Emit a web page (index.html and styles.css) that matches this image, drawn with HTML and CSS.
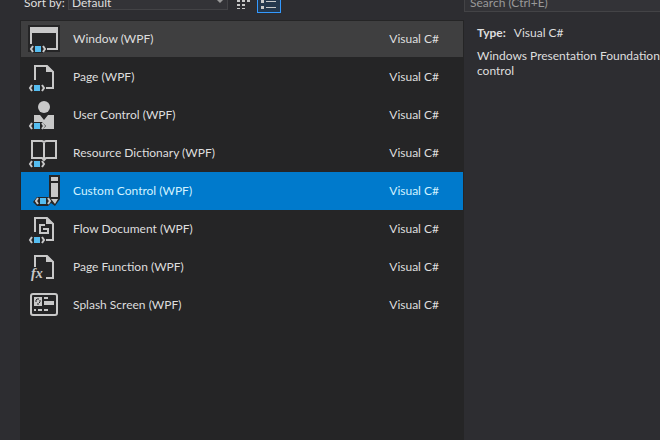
FILE: index.html
```
<!DOCTYPE html>
<html lang="en">
<head>
<meta charset="utf-8">
<title>Add New Item</title>
<link rel="stylesheet" href="styles.css">
</head>
<body>
<svg class="defs" aria-hidden="true">
<defs>
<g id="tag">
<path class="edge" d="M4 23L0 27l4 4h10l4-4-4-4z"/>
<path class="line" d="M4 24l-2 3 2 3M14 24l2 3-2 3"/>
<path class="blue" d="M6 24h6v6H6z"/>
</g>
<path id="sheet" d="M7 19V5h12l6 6v16h-7"/>
</defs>
</svg>
<div class="dialog">
<main class="templates">
<div class="toolbar">
<label for="sort">Sort by:</label>
<span class="sort">
<select id="sort">
<option>Default</option>
<option>Name Ascending</option>
<option>Name Descending</option>
</select>
<svg class="arrow" viewBox="0 0 8 4"><path d="M0 0h8L4 4z"/></svg>
</span>
<button class="view" aria-label="Small icons">
<svg viewBox="0 0 16 16"><path class="fill" d="M0 3h3v2H0zM5 3h3v2H5zM10 3h3v2h-3zM0 7h3v2H0zM5 7h3v2H5zM10 7h3v2h-3zM0 11h3v2H0zM5 11h3v2H5zM0 15h3v1H0zM5 15h3v1H5z"/></svg>
</button>
<button class="view active" aria-label="Medium icons">
<svg viewBox="0 0 16 16"><path class="fill" d="M0 1h3v3H0zM5 2h10v1H5zM0 7h3v3H0zM5 8h10v1H5zM0 13h3v3H0zM5 14h10v1H5z"/></svg>
</button>
</div>
<ul class="list">
<li class="item hover">
<svg class="icon" viewBox="0 0 32 32">
<path class="edge" d="M0 2h32v27H0z"/>
<path class="fill" d="M2 4h28v23H19v-2h9V10H4v11H2z"/>
<use href="#tag" x="1" y="-1"/>
</svg>
<span class="name">Window (WPF)</span><span class="lang">Visual C#</span>
</li>
<li class="item">
<svg class="icon" viewBox="0 0 32 32">
<use class="line" href="#sheet"/><path class="fill" d="M18 4l8 7h-8z"/>
<use href="#tag"/>
</svg>
<span class="name">Page (WPF)</span><span class="lang">Visual C#</span>
</li>
<li class="item">
<svg class="icon" viewBox="0 0 32 32">
<circle class="fill" cx="16" cy="8" r="6"/>
<path class="fill" d="M6 16h6l4 5 4-5h6v14H6z"/>
<use href="#tag"/>
</svg>
<span class="name">User Control (WPF)</span><span class="lang">Visual C#</span>
</li>
<li class="item">
<svg class="icon" viewBox="0 0 32 32">
<path class="line" d="M4 4h10l2 1 2-1h10v17H18l-2 2-2-2H4zM16 5v18"/>
<use href="#tag"/>
</svg>
<span class="name">Resource Dictionary (WPF)</span><span class="lang">Visual C#</span>
</li>
<li class="item selected">
<svg class="icon" viewBox="0 0 32 32">
<path class="edge" d="M21 0h11v24l-5 7-4-3-3 3H9l-4-4 4-5h12z"/>
<path class="fill" d="M23 2h7v4h-7zM23 8h7v14h-7zM23 24h7l-3 5z"/>
<use href="#tag" x="6" y="-1"/>
</svg>
<span class="name">Custom Control (WPF)</span><span class="lang">Visual C#</span>
</li>
<li class="item">
<svg class="icon" viewBox="0 0 32 32">
<use class="line" href="#sheet"/><path class="fill" d="M18 4l8 7h-8z"/>
<path class="line" d="M17 12h-5v8h9M15 16h6M20 15v6"/>
<use href="#tag"/>
</svg>
<span class="name">Flow Document (WPF)</span><span class="lang">Visual C#</span>
</li>
<li class="item">
<svg class="icon" viewBox="0 0 32 32">
<use class="line" href="#sheet"/><path class="fill" d="M18 4l8 7h-8z"/>
<path class="edge" d="M2 16h14v14H2z"/>
<text class="fx" x="3" y="27">fx</text>
</svg>
<span class="name">Page Function (WPF)</span><span class="lang">Visual C#</span>
</li>
<li class="item">
<svg class="icon" viewBox="0 0 32 32">
<rect class="line" x="3" y="5" width="26" height="21" rx="2"/>
<path class="fill" d="M6 8h8v9H6zM16 8h4v2h-4zM16 12h10v4H16zM6 20h2v2H6zM10 20h4v2h-4zM16 20h4v2h-4z"/>
<path class="spark" d="M10 9v2M10 14v2M7 12h2M11 12h2M8 10l1 1M12 14l-1-1"/>
</svg>
<span class="name">Splash Screen (WPF)</span><span class="lang">Visual C#</span>
</li>
</ul>
</main>
<aside class="details">
<input class="search" type="text" placeholder="Search (Ctrl+E)" aria-label="Search">
<div class="info">
<p><b>Type:</b>Visual C#</p>
<p>Windows Presentation Foundation control</p>
</div>
</aside>
</div>
</body>
</html>
```
FILE: styles.css
```
* {
box-sizing: border-box;
}
body {
margin: 0;
overflow: hidden;
background: #2d2d31;
color: #dedede;
font: 12px/16px Lato, "Open Sans", sans-serif;
}
.defs {
position: absolute;
width: 0;
height: 0;
}
/* the dialog is scrolled a little past its toolbar */
.dialog {
display: flex;
min-height: calc(100vh + 12px);
margin-top: -12px;
padding-left: 20px;
}
.templates {
display: flex;
flex-direction: column;
flex: 0 0 444px;
}
.toolbar {
display: flex;
align-items: flex-start;
height: 32px;
padding-left: 4px;
}
.toolbar label {
width: 44px;
line-height: 30px;
white-space: nowrap;
}
.sort {
position: relative;
width: 160px;
margin-right: 5px;
}
select {
appearance: none;
display: block;
width: 100%;
height: 22px;
padding: 6px 3px 0;
border: 1px solid #434346;
border-radius: 0;
background: #333337;
color: #dedede;
font: inherit;
}
.arrow {
position: absolute;
right: 4px;
top: 11px;
width: 8px;
height: 4px;
fill: #999;
}
.view {
width: 24px;
height: 25px;
padding: 3px;
border: 1px solid transparent;
background: none;
}
.view svg {
display: block;
width: 16px;
height: 16px;
}
.view.active {
border-color: #3399ff;
background: #25384d;
}
.list {
flex: 1;
margin: 0;
padding: 0;
background: #252526;
list-style: none;
}
.item {
display: flex;
align-items: center;
height: 38px;
padding: 0 24px 0 7px;
border: solid #252526;
border-width: 0 1px;
}
.hover {
background: #3f3f40;
border-width: 1px;
}
.selected {
background: #007acc;
color: #d2f2ff;
}
.icon {
width: 32px;
height: 32px;
margin-right: 13px;
}
.name {
flex: 1;
}
.fill {
fill: #c8c8c8;
}
.line {
fill: none;
stroke: #c8c8c8;
stroke-width: 2;
}
.edge {
fill: #252526;
}
.blue {
fill: #55bdf0;
}
.spark {
stroke: #252526;
stroke-width: 1;
}
.fx {
fill: #c8c8c8;
font: italic bold 14px "Liberation Serif", serif;
}
/* runs on past the right edge of the window */
.details {
flex: 1;
min-width: 0;
margin-right: -24px;
}
.search {
display: block;
width: 100%;
height: 24px;
padding: 5px 5px 0;
border: 1px solid #434346;
background: #333337;
color: #dedede;
font: inherit;
}
.search::placeholder {
color: #999;
}
.info {
padding: 13px 0 0 13px;
}
.info p {
margin: 0 0 8px;
line-height: 15px;
}
.info b {
margin-right: 8px;
}
```
